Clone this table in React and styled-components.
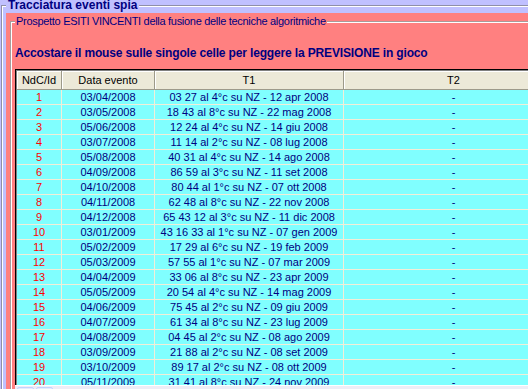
import styled, { createGlobalStyle } from 'styled-components';

const GlobalStyle = createGlobalStyle`
  html, body {
    margin: 0;
    padding: 0;
    background: #c0c0ff;
    overflow: hidden;
    height: 389px;
  }
  body {
    font-family: 'Liberation Sans', Arial, sans-serif;
  }
`;

const rows = [
  ['03/04/2008', '03 27 al 4°c su NZ - 12 apr 2008'],
  ['03/05/2008', '18 43 al 8°c su NZ - 22 mag 2008'],
  ['05/06/2008', '12 24 al 4°c su NZ - 14 giu 2008'],
  ['03/07/2008', '11 14 al 2°c su NZ - 08 lug 2008'],
  ['05/08/2008', '40 31 al 4°c su NZ - 14 ago 2008'],
  ['04/09/2008', '86 59 al 3°c su NZ - 11 set 2008'],
  ['04/10/2008', '80 44 al 1°c su NZ - 07 ott 2008'],
  ['04/11/2008', '62 48 al 8°c su NZ - 22 nov 2008'],
  ['04/12/2008', '65 43 12 al 3°c su NZ - 11 dic 2008'],
  ['03/01/2009', '43 16 33 al 1°c su NZ - 07 gen 2009'],
  ['05/02/2009', '17 29 al 6°c su NZ - 19 feb 2009'],
  ['05/03/2009', '57 55 al 1°c su NZ - 07 mar 2009'],
  ['04/04/2009', '33 06 al 8°c su NZ - 23 apr 2009'],
  ['05/05/2009', '20 54 al 4°c su NZ - 14 mag 2009'],
  ['04/06/2009', '75 45 al 2°c su NZ - 09 giu 2009'],
  ['04/07/2009', '61 34 al 8°c su NZ - 23 lug 2009'],
  ['04/08/2009', '04 45 al 2°c su NZ - 08 ago 2009'],
  ['03/09/2009', '21 88 al 2°c su NZ - 08 set 2009'],
  ['03/10/2009', '89 17 al 2°c su NZ - 08 ott 2009'],
  ['05/11/2009', '31 41 al 8°c su NZ - 24 nov 2009'],
];

const COLS = '45px 93px 189px 220px';

const OuterGroup = styled.fieldset`
  margin: -2px 0 0 1px;
  padding: 1px 0 0 4px;
  width: 560px;
  min-width: 0;
  border: 1px solid #8f8fa8;
  box-shadow: inset 1px 1px 0 #fff;
`;

const OuterLegend = styled.legend`
  padding: 0 2px;
  margin: 0;
  background: #c0c0ff;
  color: #000080;
  font-weight: bold;
  font-size: 12px;
  line-height: 14px;
`;

const PinkPanel = styled.div`
  background: #ff8080;
  padding: 1px 0 0 4px;
`;

const InnerGroup = styled.fieldset`
  margin: 0;
  padding: 18px 0 0 4px;
  min-width: 0;
  border: 1px solid #a89a9a;
  border-right: none;
  border-bottom: none;
  box-shadow: inset 1px 1px 0 #fff;
`;

const InnerLegend = styled.legend`
  padding: 0 1px;
  margin: 0;
  background: #ff8080;
  color: #000080;
  font-size: 11px;
  letter-spacing: -0.3px;
  line-height: 14px;
`;

const Hint = styled.div`
  color: #000080;
  font-weight: bold;
  font-size: 12px;
  letter-spacing: -0.15px;
  line-height: 14px;
  white-space: nowrap;
`;

const TableFrame = styled.div`
  margin-top: 9px;
  height: 316px;
  box-sizing: border-box;
  border-top: 1px solid #000;
  border-left: 1px solid #000;
  padding: 1px 0 0 1px;
  box-shadow: inset 1px 1px 0 #808080;
  overflow: hidden;
  background: #80ffff;
`;

const Grid = styled.div`
  display: grid;
  grid-template-columns: ${COLS};
`;

const HeadCell = styled.div`
  height: 19px;
  box-sizing: border-box;
  background: #ece9d8;
  border-right: 1px solid #9d9a8a;
  border-bottom: 1px solid #9d9a8a;
  box-shadow: inset 1px 1px 0 #fff;
  padding-top: 2px;
  color: #000;
  font-size: 11px;
  line-height: 14px;
  text-align: center;
`;

const Cell = styled.div`
  height: 15px;
  box-sizing: border-box;
  border-right: 1px solid #f2eed8;
  border-bottom: 1px solid #f2eed8;
  color: ${(p) => (p.red ? '#ff0000' : '#000080')};
  font-size: 11px;
  line-height: 14px;
  text-align: center;
  white-space: nowrap;
  overflow: hidden;
`;

const ScrollBar = styled.div`
  display: flex;
  height: 17px;
  border-top: 1px solid #fff;
  background: #eeedf6;
`;

const ScrollButton = styled.div`
  width: 15px;
  margin: 1px 0 0 2px;
  border: 1px solid #c3d3fd;
  border-radius: 2px;
  background: #e6ecfd;
`;

export default function App() {
  return (
    <>
      <GlobalStyle />
      <OuterGroup>
        <OuterLegend>Tracciatura eventi spia</OuterLegend>
        <PinkPanel>
          <InnerGroup>
            <InnerLegend>Prospetto ESITI VINCENTI della fusione delle tecniche algoritmiche</InnerLegend>
            <Hint>Accostare il mouse sulle singole celle per leggere la PREVISIONE in gioco</Hint>
            <TableFrame>
              <Grid>
                <HeadCell>NdC/Id</HeadCell>
                <HeadCell>Data evento</HeadCell>
                <HeadCell>T1</HeadCell>
                <HeadCell>T2</HeadCell>
                {rows.map(([date, t1], i) => [
                  <Cell key={`n${i}`} red>{i + 1}</Cell>,
                  <Cell key={`d${i}`}>{date}</Cell>,
                  <Cell key={`t${i}`}>{t1}</Cell>,
                  <Cell key={`u${i}`}>-</Cell>,
                ])}
              </Grid>
            </TableFrame>
            <ScrollBar>
              <ScrollButton />
              <ScrollButton />
            </ScrollBar>
          </InnerGroup>
        </PinkPanel>
      </OuterGroup>
    </>
  );
}
